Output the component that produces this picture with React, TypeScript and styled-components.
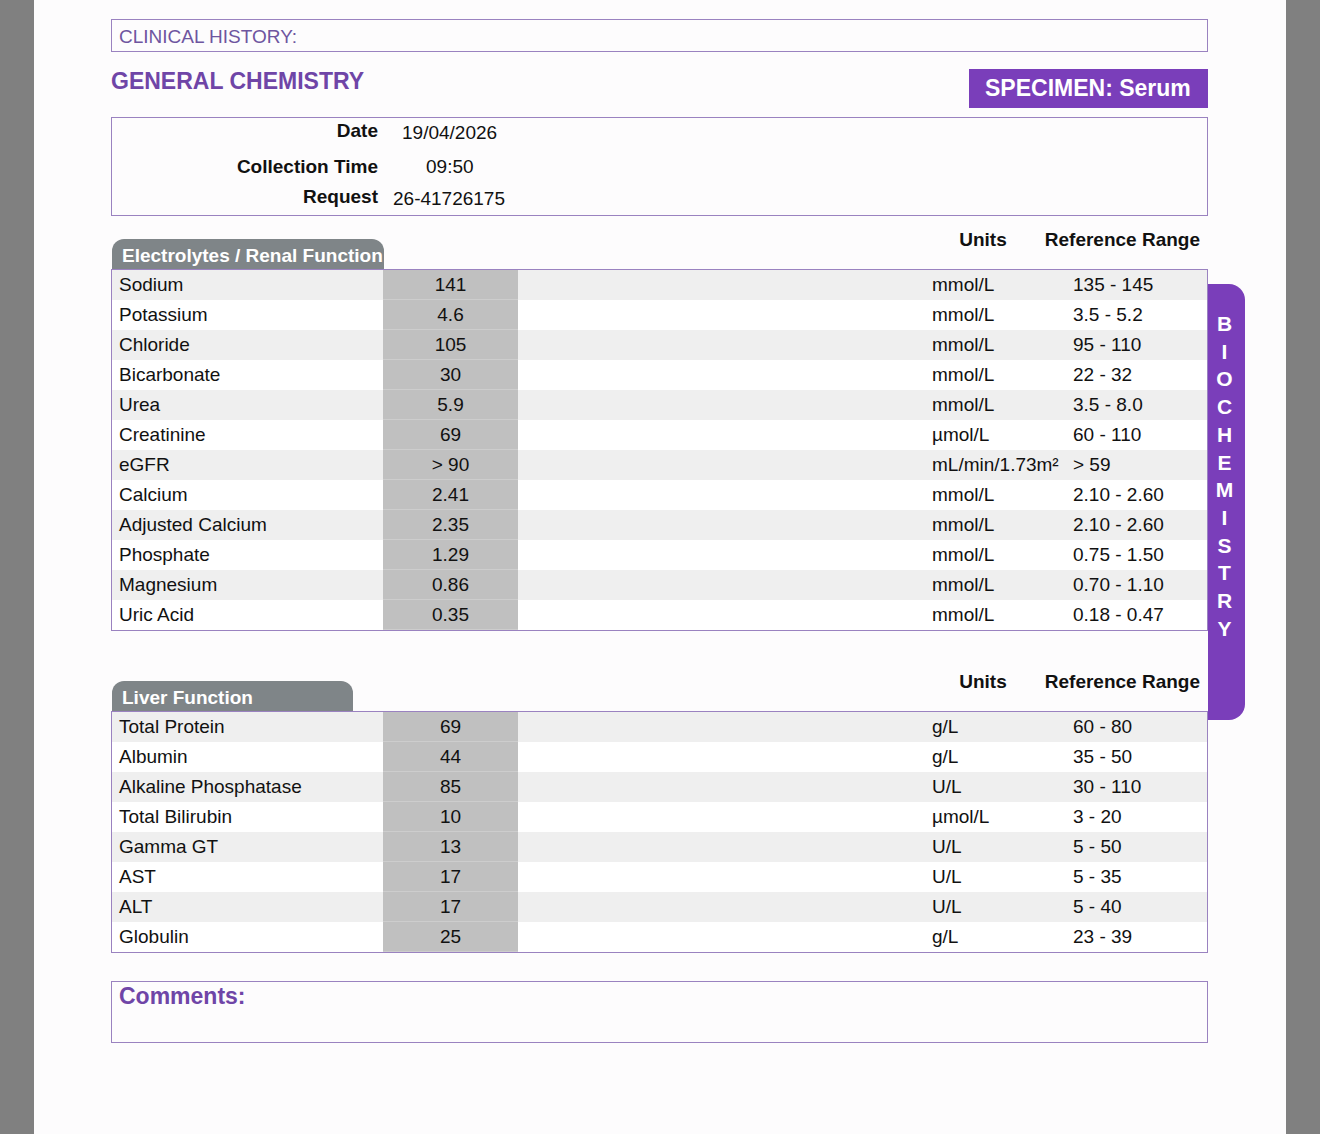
import React from "react";
import styled, { createGlobalStyle } from "styled-components";

const Global = createGlobalStyle`
  html, body { margin: 0; padding: 0; background: #808080; }
  body { font-family: "Liberation Sans", Arial, Helvetica, sans-serif; color: #111; }
  * { box-sizing: border-box; }
`;

const PURPLE = "#7a3eba";
const TITLE = "#6f45a7";
const LINE = "#9a82c0";

const Page = styled.div`
  margin: 0 34px;
  min-height: 1134px;
  background: #fdfcfd;
  padding: 19px 0 0 77px;
  display: flex;
  align-items: flex-start;
`;

const Main = styled.div`
  width: 1097px;
  display: flex;
  flex-direction: column;
`;

const ClinicalBox = styled.div`
  height: 33px;
  border: 1px solid ${LINE};
  padding: 2px 7px 0;
  font-size: 19px;
  line-height: 30px;
  color: #6e55a0;
`;

const HeadRow = styled.div`
  margin-top: 17px;
  display: flex;
  justify-content: space-between;
  align-items: flex-start;
`;

const Title = styled.h1`
  margin: 0;
  font-size: 23px;
  line-height: 24px;
  font-weight: 700;
  color: ${TITLE};
`;

const Specimen = styled.div`
  width: 239px;
  height: 39px;
  background: ${PURPLE};
  color: #fff;
  font-weight: 700;
  font-size: 23px;
  line-height: 39px;
  padding-left: 16px;
`;

const InfoBox = styled.div`
  margin-top: 9px;
  height: 99px;
  border: 1px solid ${LINE};
  padding-top: 3px;
  display: flex;
  flex-direction: column;
`;

const InfoRow = styled.div<{ $top: number }>`
  display: flex;
  margin-top: ${(p) => p.$top}px;
  font-size: 19px;
  line-height: 20px;
`;

const InfoLabel = styled.span`
  width: 266px;
  text-align: right;
  font-weight: 700;
`;

const InfoValue = styled.span<{ $offset: number; $drop?: number }>`
  padding-left: ${(p) => p.$offset}px;
  position: relative;
  top: ${(p) => p.$drop ?? 0}px;
`;

const SectionHead = styled.div<{ $height: number }>`
  height: ${(p) => p.$height}px;
  display: flex;
  align-items: flex-end;
`;

const Tab = styled.div<{ $width: number }>`
  margin-left: 1px;
  width: ${(p) => p.$width}px;
  height: 30px;
  background: #7f8588;
  border-radius: 12px 12px 0 0;
  color: #fff;
  font-weight: 700;
  font-size: 19px;
  line-height: 20px;
  padding: 7px 0 3px 10px;
  white-space: nowrap;
  overflow: hidden;
`;

const ColHeads = styled.div`
  margin-left: auto;
  display: flex;
  gap: 38px;
  padding: 0 8px 19px 0;
  font-weight: 700;
  font-size: 19px;
  line-height: 20px;
`;

const Table = styled.div`
  border: 1px solid ${LINE};
  display: flex;
  flex-direction: column;
`;

const Row = styled.div<{ $stripe: boolean }>`
  display: grid;
  grid-template-columns: 271px 135px 1fr 141px 140px;
  height: 30px;
  background: ${(p) => (p.$stripe ? "#efefef" : "#ffffff")};
  font-size: 19px;
  line-height: 30px;
  white-space: nowrap;
`;

const NameCell = styled.div`
  padding-left: 7px;
`;

const ValueCell = styled.div`
  background: #c0c0c0;
  text-align: center;
  box-shadow: inset 0 -1px 0 #cdcdcd;
`;

const Spacer = styled.div``;

const UnitCell = styled.div`
  padding-left: 6px;
`;

const RangeCell = styled.div`
  padding-left: 6px;
`;

const Comments = styled.div`
  margin-top: 28px;
  height: 62px;
  border: 1px solid ${LINE};
  padding: 1px 7px 0;
  font-size: 23px;
  line-height: 26px;
  font-weight: 700;
  color: ${TITLE};
`;

const SideTab = styled.div`
  margin-top: 265px;
  width: 37px;
  height: 436px;
  background: ${PURPLE};
  border-radius: 0 16px 16px 0;
  padding: 26px 4px 0 0;
  display: flex;
  flex-direction: column;
  align-items: center;
  color: #fff;
  font-weight: 700;
  font-size: 21px;
  line-height: 27.7px;
`;

type Result = [string, string, string, string];

const electrolytes: Result[] = [
  ["Sodium", "141", "mmol/L", "135 - 145"],
  ["Potassium", "4.6", "mmol/L", "3.5 - 5.2"],
  ["Chloride", "105", "mmol/L", "95 - 110"],
  ["Bicarbonate", "30", "mmol/L", "22 - 32"],
  ["Urea", "5.9", "mmol/L", "3.5 - 8.0"],
  ["Creatinine", "69", "µmol/L", "60 - 110"],
  ["eGFR", "> 90", "mL/min/1.73m²", "> 59"],
  ["Calcium", "2.41", "mmol/L", "2.10 - 2.60"],
  ["Adjusted Calcium", "2.35", "mmol/L", "2.10 - 2.60"],
  ["Phosphate", "1.29", "mmol/L", "0.75 - 1.50"],
  ["Magnesium", "0.86", "mmol/L", "0.70 - 1.10"],
  ["Uric Acid", "0.35", "mmol/L", "0.18 - 0.47"],
];

const liver: Result[] = [
  ["Total Protein", "69", "g/L", "60 - 80"],
  ["Albumin", "44", "g/L", "35 - 50"],
  ["Alkaline Phosphatase", "85", "U/L", "30 - 110"],
  ["Total Bilirubin", "10", "µmol/L", "3 - 20"],
  ["Gamma GT", "13", "U/L", "5 - 50"],
  ["AST", "17", "U/L", "5 - 35"],
  ["ALT", "17", "U/L", "5 - 40"],
  ["Globulin", "25", "g/L", "23 - 39"],
];

function Section({
  title,
  tabWidth,
  headHeight,
  rows,
}: {
  title: string;
  tabWidth: number;
  headHeight: number;
  rows: Result[];
}) {
  return (
    <>
      <SectionHead $height={headHeight}>
        <Tab $width={tabWidth}>{title}</Tab>
        <ColHeads>
          <span>Units</span>
          <span>Reference Range</span>
        </ColHeads>
      </SectionHead>
      <Table>
        {rows.map(([name, value, unit, range], i) => (
          <Row key={name} $stripe={i % 2 === 0}>
            <NameCell>{name}</NameCell>
            <ValueCell>{value}</ValueCell>
            <Spacer />
            <UnitCell>{unit}</UnitCell>
            <RangeCell>{range}</RangeCell>
          </Row>
        ))}
      </Table>
    </>
  );
}

export default function App() {
  return (
    <>
      <Global />
      <Page>
        <Main>
          <ClinicalBox>CLINICAL HISTORY:</ClinicalBox>
          <HeadRow>
            <Title>GENERAL CHEMISTRY</Title>
            <Specimen>SPECIMEN: Serum</Specimen>
          </HeadRow>
          <InfoBox>
            <InfoRow $top={0}>
              <InfoLabel>Date</InfoLabel>
              <InfoValue $offset={24} $drop={2}>19/04/2026</InfoValue>
            </InfoRow>
            <InfoRow $top={16}>
              <InfoLabel>Collection Time</InfoLabel>
              <InfoValue $offset={48}>09:50</InfoValue>
            </InfoRow>
            <InfoRow $top={10}>
              <InfoLabel>Request</InfoLabel>
              <InfoValue $offset={15} $drop={2}>26-41726175</InfoValue>
            </InfoRow>
          </InfoBox>
          <Section
            title="Electrolytes / Renal Function"
            tabWidth={272}
            headHeight={53}
            rows={electrolytes}
          />
          <Section title="Liver Function" tabWidth={241} headHeight={80} rows={liver} />
          <Comments>Comments:</Comments>
        </Main>
        <SideTab>
          {"BIOCHEMISTRY".split("").map((ch, i) => (
            <span key={i}>{ch}</span>
          ))}
        </SideTab>
      </Page>
    </>
  );
}
